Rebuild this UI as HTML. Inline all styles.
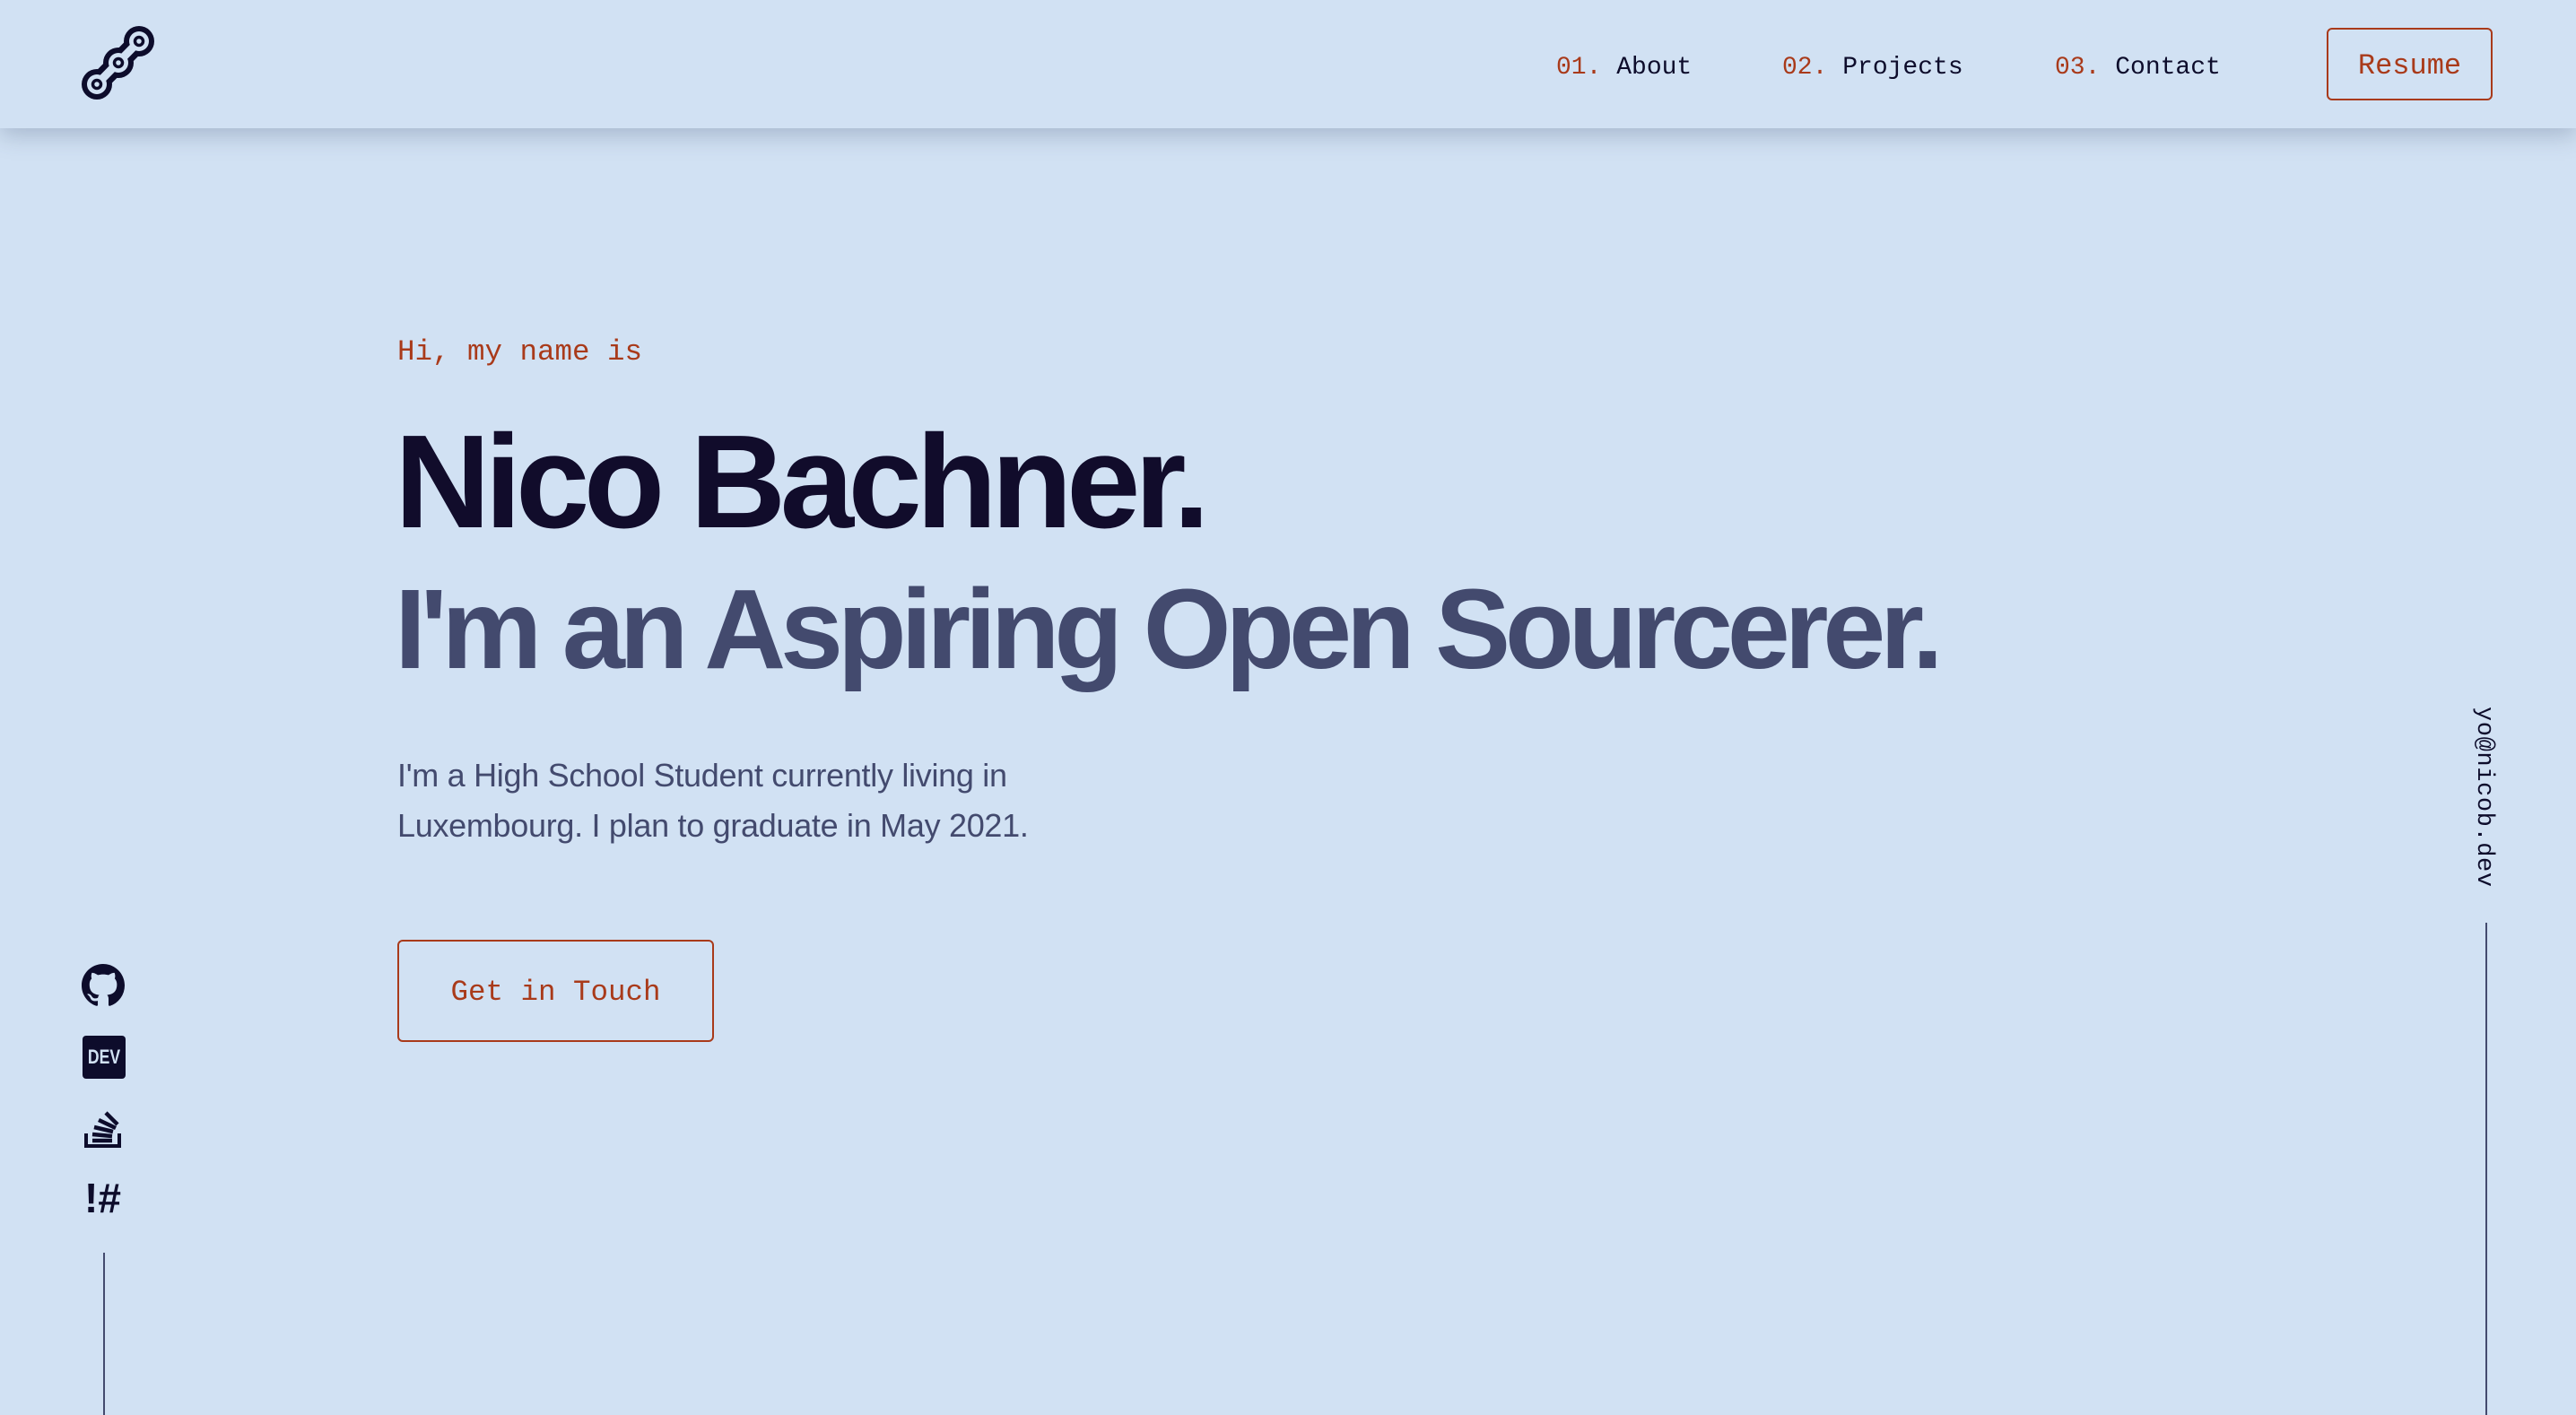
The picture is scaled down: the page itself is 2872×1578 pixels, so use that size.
<!DOCTYPE html>
<html><head><meta charset="utf-8"><style>
*{margin:0;padding:0;box-sizing:border-box}
html,body{width:2872px;height:1578px;overflow:hidden;background:#d1e1f3}
body{position:relative;font-family:"Liberation Sans",sans-serif}
.mono{font-family:"Liberation Mono",monospace}
header{position:absolute;left:0;top:0;width:2872px;height:143px;background:#d1e1f3;box-shadow:0 8px 24px rgba(60,80,110,.28);z-index:2}
.nav{position:absolute;top:60px;font-size:28px;color:#0d0c2b;white-space:nowrap}
.nav span{color:#a93a1a}
.resume{position:absolute;left:2594px;top:31px;width:185px;height:81px;border:2px solid #a93a1a;border-radius:6px;color:#a93a1a;font-size:32px;line-height:81px;text-align:center}
.abs{position:absolute;white-space:nowrap}
</style></head><body>
<header>
<svg class="abs" style="left:80px;top:20px" width="110" height="100" viewBox="80 20 110 100">
<g stroke="#0d0c2b" stroke-linecap="round" fill="#0d0c2b">
<line x1="108" y1="94" x2="155" y2="46" stroke-width="22"/>
<circle cx="108" cy="94" r="17" stroke="none"/><circle cx="132" cy="70" r="17" stroke="none"/><circle cx="155" cy="46" r="17" stroke="none"/>
</g>
<g stroke="#d1e1f3" stroke-linecap="round" fill="#d1e1f3">
<line x1="108" y1="94" x2="155" y2="46" stroke-width="9"/>
<circle cx="108" cy="94" r="11" stroke="none"/><circle cx="132" cy="70" r="11" stroke="none"/><circle cx="155" cy="46" r="11" stroke="none"/>
</g>
<g fill="none" stroke="#0d0c2b" stroke-width="3.5">
<circle cx="108" cy="94" r="4.5"/><circle cx="132" cy="70" r="4.5"/><circle cx="155" cy="46" r="4.5"/>
</g>
</svg>
<div class="nav mono" style="left:1735px"><span>01.</span> About</div>
<div class="nav mono" style="left:1987px"><span>02.</span> Projects</div>
<div class="nav mono" style="left:2291px"><span>03.</span> Contact</div>
<div class="resume mono">Resume</div>
</header>

<div class="abs mono" style="left:443px;top:374px;font-size:32.5px;color:#a93a1a">Hi, my name is</div>
<div class="abs" style="left:440px;top:453px;font-size:148px;line-height:170px;font-weight:700;color:#110c2b;letter-spacing:-6.5px">Nico Bachner.</div>
<div class="abs" style="left:440px;top:627px;font-size:126px;line-height:150px;font-weight:700;color:#434a6e;letter-spacing:-6.3px">I'm an Aspiring Open Sourcerer.</div>
<div class="abs" style="left:443px;top:837px;font-size:36px;line-height:56px;color:#434a6e;letter-spacing:-0.3px">I'm a High School Student currently living in<br>Luxembourg. I plan to graduate in May 2021.</div>
<div class="abs mono" style="left:443px;top:1048px;width:353px;height:114px;border:2px solid #a93a1a;border-radius:6px;font-size:32.5px;color:#a93a1a;line-height:114px;text-align:center">Get in Touch</div>

<svg class="abs" style="left:91px;top:1075px" width="48" height="48" viewBox="0 0 16 16"><path fill="#0d0c2b" d="M8 0C3.58 0 0 3.58 0 8c0 3.54 2.29 6.53 5.47 7.59.4.07.55-.17.55-.38 0-.19-.01-.82-.01-1.49-2.01.37-2.53-.49-2.69-.94-.09-.23-.48-.94-.82-1.13-.28-.15-.68-.52-.01-.53.63-.01 1.08.58 1.23.82.72 1.21 1.87.87 2.33.66.07-.52.28-.87.51-1.07-1.78-.2-3.64-.89-3.64-3.95 0-.87.31-1.59.82-2.15-.08-.2-.36-1.02.08-2.12 0 0 .67-.21 2.2.82.64-.18 1.32-.27 2-.27.68 0 1.36.09 2 .27 1.53-1.04 2.2-.82 2.2-.82.44 1.1.16 1.92.08 2.12.51.56.82 1.27.82 2.15 0 3.07-1.87 3.75-3.65 3.95.29.25.54.73.54 1.48 0 1.07-.01 1.93-.01 2.2 0 .21.15.46.55.38A8.013 8.013 0 0016 8c0-4.42-3.58-8-8-8z"/></svg>
<div class="abs" style="left:92px;top:1155px;width:48px;height:48px;background:#0d0c2b;border-radius:4px;"></div>
<div class="abs" style="left:92px;top:1155px;width:48px;height:48px;color:#d1e1f3;font-weight:700;font-size:22px;line-height:48px;text-align:center;transform:scaleX(0.8)">DEV</div>
<svg class="abs" style="left:92px;top:1234px" width="48" height="48" viewBox="0 0 48 48"><g fill="none" stroke="#0d0c2b" stroke-width="4"><path d="M4 30v14h37V30"/></g><g stroke="#0d0c2b" stroke-width="4.5"><line x1="11" y1="38" x2="33" y2="38"/><line x1="11" y1="31" x2="33" y2="33"/><line x1="13" y1="23" x2="34" y2="28"/><line x1="18" y1="15" x2="37" y2="24"/><line x1="26" y1="7" x2="39" y2="20"/></g></svg>
<div class="abs" style="left:94px;top:1306px;font-size:46px;font-weight:700;color:#0d0c2b;line-height:60px">!#</div>
<div class="abs" style="left:115px;top:1397px;width:2px;height:181px;background:#434a6e"></div>

<div class="abs mono" style="left:2749px;top:788px;font-size:27px;color:#0d0c2b;writing-mode:vertical-rl;letter-spacing:0.6px;line-height:40px">yo@nicob.dev</div>
<div class="abs" style="left:2771px;top:1029px;width:2px;height:549px;background:#434a6e"></div>
</body></html>
